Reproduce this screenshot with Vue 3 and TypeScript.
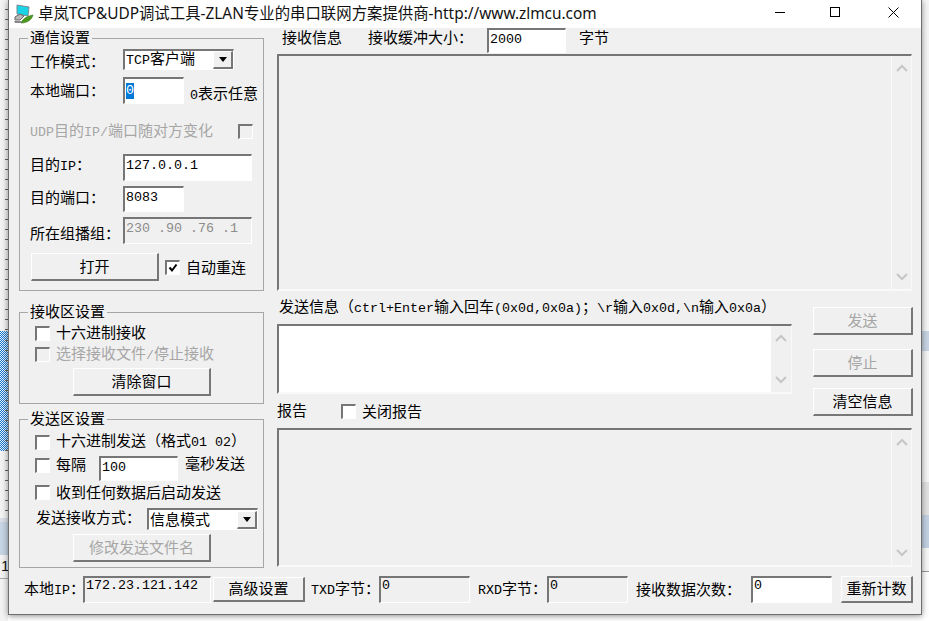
<script setup lang="ts">
const title = "卓岚TCP&UDP调试工具-ZLAN专业的串口联网方案提供商-http://www.zlmcu.com";
</script>

<template>
  <div class="screen">
    <aside class="strip left-strip">
      <div class="ticks"></div>
      <div class="dither"></div>
      <div class="ticks short"></div>
      <div class="pale"></div>
      <div class="tint"></div>
      <div class="clip"><span>1</span></div>
    </aside>

    <main class="win">
      <header class="titlebar">
        <svg class="logo" width="22" height="22" viewBox="0 0 22 22">
          <path d="M5 2 L17 4 L16 13 L5 11 Z" fill="#19d3e6" stroke="#7c8a90" stroke-width="1" />
          <path d="M3 14 L8 11 L12 13 L8 17 L3 17 Z" fill="#b9b9b9" stroke="#666" stroke-width="1" />
          <path d="M9 20 C11 15 16 13 21 12 C20 16 16 20 9 20 Z" fill="#4c9a1c" stroke="#2f6d10" stroke-width=".6" />
          <path d="M2 18 L10 18 L9 20 L3 20 Z" fill="#8a8a8a" />
        </svg>
        <span class="title-text">{{ title }}</span>
        <svg class="ctl ctl-min" width="10" height="10" viewBox="0 0 10 10"><path d="M0 5.5H10" stroke="#000" /></svg>
        <svg class="ctl ctl-max" width="10" height="10" viewBox="0 0 10 10"><rect x=".5" y=".5" width="9" height="9" fill="none" stroke="#000" /></svg>
        <svg class="ctl ctl-close" width="11" height="11" viewBox="0 0 11 11"><path d="M.5 .5L10.5 10.5M10.5 .5L.5 10.5" stroke="#000" /></svg>
      </header>

      <div class="body">
        <div class="main-grid">
          <section class="left-col">
            <fieldset class="group g-comm">
              <legend>通信设置</legend>
              <div class="row r1">
                <label class="lbl">工作模式：</label>
                <div class="combo combo-mode"><span class="combo-text"><span class="m">TCP</span>客户端</span><span class="combo-btn"><i class="arrow"></i></span></div>
              </div>
              <div class="row r2">
                <label class="lbl">本地端口：</label>
                <div class="field w61 h27"><span class="sel m">0</span></div>
                <span class="hint"><span class="m">0</span>表示任意</span>
              </div>
              <div class="row r3">
                <span class="dim udp-lbl"><span class="m">UDP</span>目的<span class="m">IP/</span>端口随对方变化</span>
                <span class="check off"></span>
              </div>
              <div class="row r4">
                <label class="lbl">目的<span class="m">IP</span>：</label>
                <div class="field w129 h27 m">127.0.0.1</div>
              </div>
              <div class="row r5">
                <label class="lbl">目的端口：</label>
                <div class="field w61 h26 m">8083</div>
              </div>
              <div class="row r6">
                <label class="lbl lbl-low">所在组播组：</label>
                <div class="field w129 h27 m off grayed">230 .90 .76 .1</div>
              </div>
              <div class="row r7">
                <button type="button" class="btn open-btn">打开</button>
                <span class="check on"><svg width="10" height="10" viewBox="0 0 10 10"><path d="M1.5 4.5L4 7.5L8.5 1.5" fill="none" stroke="#000" stroke-width="2" /></svg></span>
                <span class="auto">自动重连</span>
              </div>
            </fieldset>

            <fieldset class="group g-recv">
              <legend>接收区设置</legend>
              <div class="row c1"><span class="check"></span><span class="ctext up2">十六进制接收</span></div>
              <div class="row c2"><span class="check off"></span><span class="ctext flat dim">选择接收文件<span class="m">/</span>停止接收</span></div>
              <div class="row c3"><button type="button" class="btn clear-btn">清除窗口</button></div>
            </fieldset>

            <fieldset class="group g-send">
              <legend>发送区设置</legend>
              <div class="row s1"><span class="check"></span><span class="ctext">十六进制发送（格式<span class="m">01 02</span>）</span></div>
              <div class="row s2">
                <span class="check s2-check"></span><span class="ctext every">每隔</span>
                <div class="field w79 h25 m">100</div>
                <span class="ms">毫秒发送</span>
              </div>
              <div class="row s3"><span class="check"></span><span class="ctext">收到任何数据后启动发送</span></div>
              <div class="row s4">
                <span class="way">发送接收方式：</span>
                <div class="combo combo-way"><span class="combo-text">信息模式</span><span class="combo-btn"><i class="arrow"></i></span></div>
              </div>
              <div class="row s5"><button type="button" class="btn clear-btn" disabled>修改发送文件名</button></div>
            </fieldset>
          </section>

          <section class="right-col">
            <div class="rtop">
              <span class="rt1">接收信息</span>
              <span class="rt2">接收缓冲大小：</span>
              <div class="field w79 h25 m">2000</div>
              <span class="rt3">字节</span>
            </div>
            <div class="box recv-box">
              <div class="box-fill"></div>
              <div class="sbar">
                <svg width="14" height="8" viewBox="0 0 14 8"><path d="M2 7L7 2L12 7" fill="none" stroke="#c6c6c6" stroke-width="2" /></svg>
                <svg width="14" height="8" viewBox="0 0 14 8"><path d="M2 1L7 6L12 1" fill="none" stroke="#c6c6c6" stroke-width="2" /></svg>
              </div>
            </div>

            <div class="mid">
              <div class="mid-left">
                <div class="send-label">发送信息（<span class="m">ctrl+Enter</span>输入回车<span class="m">(0x0d,0x0a)</span>；<span class="m">\r</span>输入<span class="m">0x0d,\n</span>输入<span class="m">0x0a</span>）</div>
                <div class="box send-box">
                  <div class="box-fill white"></div>
                  <div class="sbar">
                    <svg width="14" height="8" viewBox="0 0 14 8"><path d="M2 7L7 2L12 7" fill="none" stroke="#c6c6c6" stroke-width="2" /></svg>
                    <svg width="14" height="8" viewBox="0 0 14 8"><path d="M2 1L7 6L12 1" fill="none" stroke="#c6c6c6" stroke-width="2" /></svg>
                  </div>
                </div>
                <div class="report-row">
                  <span class="rp">报告</span>
                  <span class="check rp-check"></span>
                  <span class="rp-off">关闭报告</span>
                </div>
              </div>
              <div class="mid-btns">
                <button type="button" class="btn act a1" disabled>发送</button>
                <button type="button" class="btn act a2" disabled>停止</button>
                <button type="button" class="btn act a3">清空信息</button>
              </div>
            </div>

            <div class="box report-box">
              <div class="box-fill"></div>
              <div class="sbar">
                <svg width="14" height="8" viewBox="0 0 14 8"><path d="M2 7L7 2L12 7" fill="none" stroke="#c6c6c6" stroke-width="2" /></svg>
                <svg width="14" height="8" viewBox="0 0 14 8"><path d="M2 1L7 6L12 1" fill="none" stroke="#c6c6c6" stroke-width="2" /></svg>
              </div>
            </div>
          </section>
        </div>

        <footer class="bottom">
          <span class="b-ip">本地<span class="m">IP</span>：</span>
          <div class="field b-ipf m off tight">172.23.121.142</div>
          <button type="button" class="btn b-adv">高级设置</button>
          <span class="b-txd"><span class="m">TXD</span>字节：</span>
          <div class="field b-txf m off tight">0</div>
          <span class="b-rxd"><span class="m">RXD</span>字节：</span>
          <div class="field b-rxf m off tight">0</div>
          <span class="b-cnt">接收数据次数：</span>
          <div class="field b-cntf m tight">0</div>
          <button type="button" class="btn b-reset">重新计数</button>
        </footer>
      </div>
    </main>

    <aside class="strip right-strip">
      <div class="rs a"></div>
      <div class="rs b"></div>
      <div class="rs c"></div>
      <div class="rs d"></div>
      <div class="rs e"></div>
      <div class="rs f"></div>
    </aside>
  </div>
</template>

<style>
html, body { margin: 0; background: #fff; }
</style>

<style scoped>
.screen {
  width: 929px;
  height: 621px;
  display: flex;
  overflow: hidden;
  background: #fff;
  color: #000;
  font: 15px/16px "Noto Sans CJK SC", sans-serif;
}
.m { font-family: "Liberation Mono", "Noto Sans CJK SC", monospace; font-size: 13.33px; }

.strip { flex: none; height: 621px; display: flex; flex-direction: column; }
.left-strip { width: 8px; background: #f3f3f3; }
.ticks {
  height: 331px;
  background: repeating-linear-gradient(to bottom, transparent 0 9px, #6a6457 9px 10px) right / 3px 100% no-repeat;
}
.ticks.short { height: 60px; }
.dither {
  height: 120px;
  background:
    repeating-linear-gradient(to bottom, transparent 0 9px, #6a6457 9px 10px) right / 3px 100% no-repeat,
    repeating-conic-gradient(#1476cf 0 25%, #e8f2fb 0 50%) left / 2px 2px;
  background-size: 3px 100%, 2px 2px;
  background-repeat: no-repeat, repeat;
  background-position: right, left;
}
.pale { height: 4px; margin-top: 7px; background: #dcdfe8; }
.tint { height: 33px; background: #c6d4e3; }
.clip {
  height: 23px;
  border-bottom: 1px solid #aaa;
  font: 15px/22px "Liberation Sans", sans-serif;
  color: #111;
  overflow: hidden;
  padding-left: 1px;
}

.right-strip { width: 7px; }
.rs.a { height: 331px; background: #f5f5f5; }
.rs.b { height: 20px; background: #c9d5e4; }
.rs.c { height: 131px; background: #f5f5f5; }
.rs.d { height: 33px; background: #e2e2e2; }
.rs.e { height: 33px; background: #c3d2e3; }
.rs.f { height: 23px; border-bottom: 1px solid #999; background: #f7f7f7; }

.win {
  flex: none;
  width: 914px;
  height: 615px;
  box-sizing: border-box;
  border: 1px solid #6e6e6e;
  border-top: 0;
  background: #f0f0f0;
  box-shadow: 0 1px 6px rgba(0, 0, 0, .45);
  position: relative;
  z-index: 1;
  display: flex;
  flex-direction: column;
}
.titlebar {
  height: 28px;
  flex: none;
  background: #fff;
  display: flex;
  align-items: center;
}
.logo { margin-left: 3px; flex: none; }
.title-text {
  margin-left: 4px;
  font: 15.4px/20px "Noto Sans", "Noto Sans CJK SC", sans-serif;
  color: #111;
  white-space: nowrap;
}
.ctl { flex: none; margin-bottom: 4px; }
.ctl-min { margin-left: auto; }
.ctl-max { margin-left: 45px; }
.ctl-close { margin-left: 48px; margin-right: 22px; }

.body { padding-left: 10px; flex: 1; display: flex; flex-direction: column; }
.main-grid { display: flex; height: 540px; }
.left-col { width: 245px; flex: none; padding-top: 2px; box-sizing: border-box; }
.right-col { width: 635px; margin-left: 13px; flex: none; }

.group {
  margin: 0;
  padding: 0;
  box-sizing: border-box;
  width: 245px;
  min-width: 0;
  border: 1px solid #a6a6a6;
  display: block;
}
.group legend { margin-left: 8px; padding: 0 2px; height: 16px; line-height: 14px; }
.g-comm { height: 261px; }
.g-recv { height: 100px; margin-top: 13px; }
.g-send { height: 157px; margin-top: 7px; }

.row { display: flex; align-items: center; white-space: nowrap; }
.g-comm .row { padding-left: 10px; }
.r1 { margin-top: 4px; height: 20px; }
.r2 { margin-top: 7px; height: 27px; }
.r3 { margin-top: 20px; height: 14px; }
.r4 { margin-top: 16px; height: 27px; }
.r5 { margin-top: 5px; height: 26px; }
.r6 { margin-top: 5px; height: 27px; }
.r7 { margin-top: 9px; height: 28px; }
.lbl { width: 93px; flex: none; }
.r1 .lbl { padding-top: 2px; }
.r2 .lbl { padding-bottom: 2px; }
.r4 .lbl, .r5 .lbl { padding-bottom: 4px; }
.lbl-low { padding-top: 4px; }
.hint { margin-left: 6px; padding-top: 8px; }
.udp-lbl { width: 208px; flex: none; }
.dim { color: #a6a6a6; }

.field {
  box-sizing: border-box;
  background: #fff;
  border-style: solid;
  border-width: 2px 1px 1px 2px;
  border-color: #767676 #fff #fff #767676;
  padding: 1px 0 0 1px;
  flex: none;
  line-height: 16px;
  white-space: pre;
  align-self: flex-start;
}
.field.off { background: #f0f0f0; }
.field.grayed { color: #8c8c8c; }
.field.tight { padding-top: 0; line-height: 15px; }
.w61 { width: 61px; }
.w79 { width: 79px; }
.w129 { width: 129px; }
.h25 { height: 25px; }
.h26 { height: 26px; }
.h27 { height: 27px; }
.h25.m, .h26.m, .h27.m { padding-top: 2px; }
.sel { display: inline-block; background: #0078d7; color: #fff; height: 16px; width: 8px; }

.combo {
  box-sizing: border-box;
  height: 21px;
  border-style: solid;
  border-width: 2px 1px 1px 2px;
  border-color: #767676 #fff #fff #767676;
  background: #fff;
  display: flex;
  align-items: center;
  justify-content: space-between;
  flex: none;
}
.combo-mode { width: 111px; margin-top: -1px; }
.combo-way { width: 111px; }
.combo-text { padding-left: 1px; padding-bottom: 2px; }
.combo-btn {
  width: 20px;
  height: 18px;
  box-sizing: border-box;
  background: #f0f0f0;
  border-style: solid;
  border-width: 1px 2px 2px 1px;
  border-color: #fff #777 #777 #fff;
  display: flex;
  align-items: center;
  justify-content: center;
  flex: none;
}
.arrow {
  width: 0;
  height: 0;
  border-left: 4.5px solid transparent;
  border-right: 4.5px solid transparent;
  border-top: 5px solid #000;
}

.check {
  box-sizing: border-box;
  width: 15px;
  height: 15px;
  flex: none;
  display: inline-flex;
  align-items: center;
  justify-content: center;
  background: #fff;
  border-style: solid;
  border-width: 2px 1px 1px 2px;
  border-color: #767676 #fff #fff #767676;
}
.check.off { background: #f0f0f0; }

.btn {
  box-sizing: border-box;
  margin: 0;
  padding: 0 0 2px;
  background: #f0f0f0;
  border-style: solid;
  border-width: 1px 2px 2px 1px;
  border-color: #fff #777 #777 #fff;
  color: #000;
  font: 15px/16px "Noto Sans CJK SC", sans-serif;
  flex: none;
}
.btn:disabled { color: #a6a6a6; }

.open-btn { width: 128px; height: 28px; margin-left: 1px; }
.r7 .check { margin-left: 6px; }
.auto { margin-left: 6px; }

.g-recv .row, .g-send .row { padding-left: 15px; }
.ctext { margin-left: 6px; padding-bottom: 2px; }
.ctext.up2 { padding-bottom: 4px; }
.ctext.flat { padding-bottom: 0; }
.c1 { margin-top: 6px; height: 15px; }
.c2 { margin-top: 6px; height: 15px; }
.c3 { margin-top: 6px; height: 28px; }
.clear-btn { width: 138px; height: 28px; margin-left: 38px; }

.s1 { margin-top: 8px; height: 15px; }
.s2 { margin-top: 6px; height: 25px; align-items: flex-start; }
.s2-check { margin-top: 2px; }
.every { padding-bottom: 0; }
.s2 .field { margin-left: 13px; }
.ms { margin-left: 7px; margin-top: -1px; }
.s3 { margin-top: 4px; height: 15px; }
.s4 { margin-top: 8px; height: 22px; }
.way { width: 111px; flex: none; margin-left: 1px; padding-bottom: 4px; }
.combo-way { height: 22px; }
.s5 { margin-top: 4px; height: 28px; }

.rtop { display: flex; height: 25px; white-space: nowrap; align-items: flex-start; }
.rt1 { margin-left: 5px; width: 86px; flex: none; margin-top: 1px; }
.rt2 { width: 119px; flex: none; margin-top: 1px; }
.rt3 { margin-left: 13px; margin-top: 1px; }

.box {
  box-sizing: border-box;
  display: flex;
  border-style: solid;
  border-width: 2px 1px 2px 2px;
  border-color: #767676 #f9f9f9 #f9f9f9 #767676;
}
.recv-box { width: 635px; height: 237px; margin-top: 1px; }
.send-box { width: 515px; height: 70px; margin-top: 10px; }
.report-box { width: 635px; height: 139px; margin-top: 0; }
.box-fill { flex: 1; background: #f0f0f0; }
.box-fill.white { background: #fff; }
.sbar {
  width: 20px;
  flex: none;
  border-left: 1px solid #f9f9f9;
  background: #f0f0f0;
  display: flex;
  flex-direction: column;
  justify-content: space-between;
  align-items: center;
  padding: 8px 0;
  box-sizing: border-box;
}
.send-box .sbar { border-left: 0; }

.mid { display: flex; height: 137px; }
.mid-left { width: 515px; flex: none; }
.send-label { margin-top: 7px; height: 16px; white-space: nowrap; padding-left: 2px; }
.report-row { margin-top: 9px; height: 16px; display: flex; align-items: center; white-space: nowrap; }
.rp { width: 64px; flex: none; margin-top: -2px; }
.rp-off { margin-left: 6px; }
.mid-btns { margin-left: 21px; display: flex; flex-direction: column; margin-top: 16px; }
.act { width: 100px; height: 28px; }
.a2 { margin-top: 14px; }
.a3 { margin-top: 11px; }

.bottom { margin-top: 8px; height: 27px; display: flex; align-items: center; white-space: nowrap; padding-left: 5px; }
.bottom .field { height: 27px; align-self: stretch; }
.b-ip { width: 59px; flex: none; }
.b-ipf { width: 128px; }
.b-adv { width: 92px; height: 25px; margin-left: 2px; }
.b-txd { width: 68px; margin-left: 6px; flex: none; }
.b-txf { width: 91px; }
.b-rxd { width: 69px; margin-left: 8px; flex: none; }
.b-rxf { width: 81px; }
.b-cnt { width: 115px; margin-left: 8px; flex: none; padding-bottom: 2px; }
.b-cntf { width: 81px; }
.b-reset { width: 72px; height: 27px; margin-left: 9px; }
</style>
